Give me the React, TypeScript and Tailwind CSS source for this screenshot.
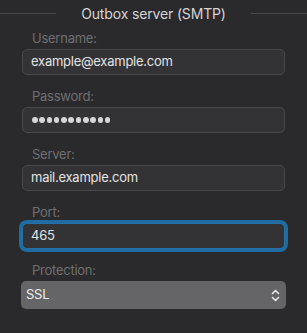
const fields = [
  { label: "Username:", value: "example@example.com" },
  { label: "Password:", value: "", secret: true },
  { label: "Server:", value: "mail.example.com" },
  { label: "Port:", value: "465", focused: true },
];

function Dots() {
  return (
    <div className="flex items-center gap-[1.8px] pl-[1px]">
      {Array.from({ length: 11 }).map((_, i) => (
        <span key={i} className="block w-[5.5px] h-[5.5px] rounded-full bg-[#d6d6d8]" />
      ))}
    </div>
  );
}

export default function App() {
  return (
    <div className="w-[307px] h-[333px] bg-[#2a2a2c] font-['Inter',sans-serif] overflow-hidden">
      {/* Section header */}
      <div className="flex items-center h-[26px] gap-[25px]">
        <div className="flex-1 h-px bg-[#4a4a4c]" />
        <span className="text-[14px] tracking-[-0.15px] text-[#d4d4d6] whitespace-nowrap">Outbox server (SMTP)</span>
        <div className="flex-1 h-px bg-[#4a4a4c]" />
      </div>

      <div className="px-[22px] pt-[4px] flex flex-col gap-[13px] text-[13px] tracking-[-0.25px]">
        {fields.map((f) => (
          <div key={f.label} className="flex flex-col gap-[3px]">
            <label className="h-[16px] leading-[16px] pl-[10px] text-[#6f6f72]">{f.label}</label>
            <div
              className={
                "h-[26px] rounded-[5px] bg-[#333335] flex items-center pl-[8px] text-[#e2e2e4] border " +
                (f.focused ? "border-[#2571a8] ring-[3px] ring-[#1f6ca3]" : "border-[#48484a]")
              }
            >
              {f.secret ? <Dots /> : f.value}
            </div>
          </div>
        ))}

        <div className="flex flex-col gap-[3px]">
          <label className="h-[16px] leading-[16px] pl-[10px] text-[#6f6f72]">Protection:</label>
          <div className="-mx-[1px] h-[28px] rounded-[5px] bg-[#656567] flex items-center justify-between pl-[5px] pr-[6px] text-[#ececee]">
            <span>SSL</span>
            <svg width="9" height="13" viewBox="0 0 9 13" fill="none" stroke="#e8e8ea" strokeWidth="1.6" strokeLinecap="round" strokeLinejoin="round">
              <path d="M1.5 4.5 L4.5 1.5 L7.5 4.5" />
              <path d="M1.5 8.5 L4.5 11.5 L7.5 8.5" />
            </svg>
          </div>
        </div>
      </div>
    </div>
  );
}
